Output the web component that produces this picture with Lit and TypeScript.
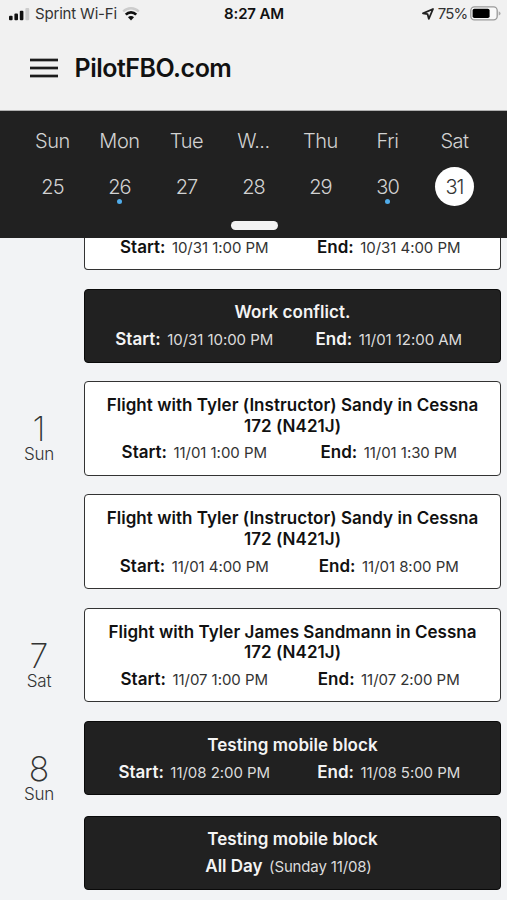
import { LitElement, html, css, svg, nothing } from "lit";
import { customElement, property } from "lit/decorators.js";

interface Entry {
  day?: string;
  weekday?: string;
  title: string;
  start?: string;
  end?: string;
  allDay?: string;
  dark?: boolean;
  tail?: boolean;
}

const WEEK = [
  { name: "Sun", date: "25" },
  { name: "Mon", date: "26", dot: true },
  { name: "Tue", date: "27" },
  { name: "W...", date: "28" },
  { name: "Thu", date: "29" },
  { name: "Fri", date: "30", dot: true },
  { name: "Sat", date: "31", selected: true },
];

const ENTRIES: Entry[] = [
  { title: "", start: "10/31 1:00 PM", end: "10/31 4:00 PM", tail: true },
  { title: "Work conflict.", start: "10/31 10:00 PM", end: "11/01 12:00 AM", dark: true },
  { day: "1", weekday: "Sun", title: "Flight with Tyler (Instructor) Sandy in Cessna 172 (N421J)", start: "11/01 1:00 PM", end: "11/01 1:30 PM" },
  { title: "Flight with Tyler (Instructor) Sandy in Cessna 172 (N421J)", start: "11/01 4:00 PM", end: "11/01 8:00 PM" },
  { day: "7", weekday: "Sat", title: "Flight with Tyler James Sandmann in Cessna 172 (N421J)", start: "11/07 1:00 PM", end: "11/07 2:00 PM" },
  { day: "8", weekday: "Sun", title: "Testing mobile block", start: "11/08 2:00 PM", end: "11/08 5:00 PM", dark: true },
  { title: "Testing mobile block", allDay: "(Sunday 11/08)", dark: true },
];

@customElement("status-bar")
class StatusBar extends LitElement {
  static styles = css`
    :host { display: grid; grid-template-columns: 1fr auto 1fr; align-items: center; height: 27px; padding: 0 6px 0 9px; font-size: 15px; color: #333; }
    .side { display: flex; align-items: center; }
    .right { justify-content: flex-end; }
    .signal { margin-right: 5px; }
    .carrier { letter-spacing: -0.18px; }
    .wifi { margin-left: 5px; }
    .time { font-weight: 600; color: #111; letter-spacing: -0.15px; margin-right: 2px; }
    .arrow { margin-right: 4px; }
    .percent { letter-spacing: -0.8px; margin-right: 2.5px; }
    svg { display: block; }
  `;
  render() {
    return html`
      <div class="side">
        <svg class="signal" width="21" height="14" viewBox="0 0 21 14">
          <rect x="0" y="8.8" width="3.6" height="4.4" rx="1" fill="#111" />
          <rect x="5.4" y="6.5" width="3.6" height="6.7" rx="1" fill="#111" />
          <rect x="10.8" y="3.8" width="3.6" height="9.4" rx="1" fill="#111" />
          <rect x="16.4" y="0.9" width="3.8" height="12.3" rx="1" fill="#ccc" />
        </svg>
        <span class="carrier">Sprint Wi-Fi</span>
        <svg class="wifi" width="18" height="14" viewBox="0 0 18 14">
          <path d="M1.2 4.5A11 11 0 0 1 16.8 4.5" fill="none" stroke="#ccc" stroke-width="2.4" />
          <path d="M3.8 7.6A7.2 7.2 0 0 1 14.2 7.6" fill="none" stroke="#111" stroke-width="2.7" />
          <path d="M9 13.4 6 10.3A4 4 0 0 1 12 10.3Z" fill="#111" />
        </svg>
      </div>
      <span class="time">8:27 AM</span>
      <div class="side right">
        <svg class="arrow" width="12" height="12" viewBox="0 0 12 12">
          <path d="M11 1 1 5.4 5.6 6.2 6.8 10.8Z" fill="none" stroke="#222" stroke-width="1.8" stroke-linejoin="round" />
        </svg>
        <span class="percent">75%</span>
        <svg width="31" height="15" viewBox="0 0 31 15">
          <rect x="0.8" y="0.9" width="26.4" height="13" rx="3.6" fill="#f8f8f8" stroke="#999" stroke-width="1.3" />
          <rect x="2.6" y="2.7" width="17" height="9.4" rx="1.8" fill="#000" />
          <path d="M28.7 5.2Q30.6 6 30.6 7.4T28.7 9.6Z" fill="#aaa" />
        </svg>
      </div>
    `;
  }
}

@customElement("week-strip")
class WeekStrip extends LitElement {
  static styles = css`
    :host { display: flex; flex-direction: column; align-items: center; height: 126.5px; background: #212121; color: #d2d2d2; font-size: 20px; font-weight: 300; }
    .days { display: grid; grid-template-columns: repeat(7, 67px); width: 469px; padding-top: 18px; }
    .day { display: flex; flex-direction: column; align-items: center; }
    .name { line-height: 25px; letter-spacing: -0.45px; }
    .date { position: relative; display: grid; place-items: center; width: 39px; height: 39px; margin-top: 13px; border-radius: 50%; letter-spacing: -0.9px; }
    .selected { background: #fff; color: #333; }
    .dot { position: absolute; left: 17px; top: 32px; width: 5px; height: 5px; border-radius: 50%; background: #50acea; }
    .knob { width: 47px; height: 9px; margin-top: 15px; margin-left: 1px; border-radius: 5px; background: #f2f2f2; }
  `;
  render() {
    return html`
      <div class="days">
        ${WEEK.map(
          (d) => html`<div class="day">
            <span class="name">${d.name}</span>
            <span class="date ${d.selected ? "selected" : ""}">${d.date}${d.dot ? html`<i class="dot"></i>` : nothing}</span>
          </div>`
        )}
      </div>
      <div class="knob"></div>
    `;
  }
}

@customElement("agenda-row")
class AgendaRow extends LitElement {
  @property({ attribute: false }) entry!: Entry;
  static styles = css`
    :host { display: flex; align-items: flex-start; padding-right: 6px; }
    .gutter { width: 84px; height: 74px; flex: none; box-sizing: border-box; padding: 30px 6px 0 0; text-align: center; color: #333; }
    .short { height: 0; padding: 0; }
    .number { font-size: 34px; line-height: 35px; font-weight: 200; }
    .weekday { font-size: 17px; line-height: 16px; font-weight: 300; letter-spacing: -0.2px; }
    .card { flex: 1; box-sizing: border-box; padding: 12.8px 14px 11.5px 12px; border: 1.4px solid #333; border-radius: 4px; background: #fff; color: #111; }
    .dark { background: #212121; border-color: #0a0a0a; color: #f4f4f4; }
    .tail { padding-top: 0; height: 32.5px; border-top: 0; border-radius: 0 0 4px 4px; }
    .title { padding: 0 4px 0 6px; font-size: 17px; line-height: 20.7px; font-weight: 600; letter-spacing: 0.04px; text-align: center; margin-bottom: 6px; }
    .times { display: grid; grid-template-columns: 1fr 1fr; }
    .cell { display: flex; justify-content: center; align-items: baseline; gap: 6.5px; line-height: 21px; white-space: nowrap; }
    .tail .times { margin-top: -1px; }
    .all { grid-column: 1 / 3; padding-right: 6px; }
    .label { font-size: 17px; font-weight: 600; }
    .value { font-size: 15px; color: #333; letter-spacing: -0.05px; }
    .all .value { letter-spacing: -0.15px; }
    .dark .value { color: #dcdcdc; }
  `;
  render() {
    const e = this.entry;
    return html`
      <div class="gutter ${e.day ? "" : "short"}">
        ${e.day ? html`<div class="number">${e.day}</div><div class="weekday">${e.weekday}</div>` : nothing}
      </div>
      <div class="card ${e.dark ? "dark" : ""} ${e.tail ? "tail" : ""}">
        ${e.title ? html`<div class="title">${e.title}</div>` : nothing}
        <div class="times">
          ${e.allDay
            ? html`<div class="cell all"><span class="label">All Day</span><span class="value">${e.allDay}</span></div>`
            : html`<div class="cell"><span class="label">Start:</span><span class="value">${e.start}</span></div>
                <div class="cell"><span class="label">End:</span><span class="value">${e.end}</span></div>`}
        </div>
      </div>
    `;
  }
}

@customElement("app-root")
class AppRoot extends LitElement {
  static styles = css`
    :host { display: flex; flex-direction: column; height: 900px; overflow: hidden; background: #f2f3f5; font-family: Inter, "Liberation Sans", sans-serif; }
    .top { height: 111px; flex: none; box-sizing: border-box; background: #f1f1f1; border-bottom: 1px solid #b0b0b0; }
    .brand { display: flex; align-items: center; gap: 16.5px; height: 82px; padding-left: 30px; }
    .name { font-size: 25px; font-weight: 600; color: #111; letter-spacing: -0.5px; }
    .list { display: flex; flex-direction: column; gap: 18.6px; }
    .last { margin-top: 2px; }
    week-strip { flex: none; }
  `;
  render() {
    return html`
      <header class="top">
        <status-bar></status-bar>
        <div class="brand">
          <svg width="28" height="20" viewBox="0 0 28 20">
            ${[2, 10, 18].map((y) => svg`<path d="M0 ${y}H28" stroke="#1c1c1c" stroke-width="2.7" />`)}
          </svg>
          <span class="name">PilotFBO.com</span>
        </div>
      </header>
      <week-strip></week-strip>
      <main class="list">
        ${ENTRIES.map((e) => html`<agenda-row class=${e.allDay ? "last" : ""} .entry=${e}></agenda-row>`)}
      </main>
    `;
  }
}
